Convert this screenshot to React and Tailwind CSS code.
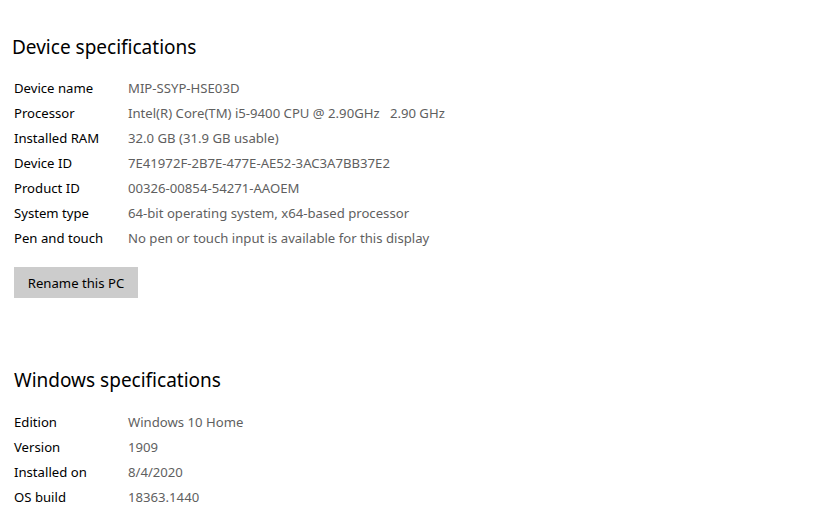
const deviceSpecs = [
    ['Device name', 'MIP-SSYP-HSE03D'],
    ['Processor', 'Intel(R) Core(TM) i5-9400 CPU @ 2.90GHz   2.90 GHz'],
    ['Installed RAM', '32.0 GB (31.9 GB usable)'],
    ['Device ID', '7E41972F-2B7E-477E-AE52-3AC3A7BB37E2'],
    ['Product ID', '00326-00854-54271-AAOEM'],
    ['System type', '64-bit operating system, x64-based processor'],
    ['Pen and touch', 'No pen or touch input is available for this display'],
];

const windowsSpecs = [
    ['Edition', 'Windows 10 Home'],
    ['Version', '1909'],
    ['Installed on', '8/4/2020'],
    ['OS build', '18363.1440'],
];

function SpecRow({ label, value }) {
    return (
        <div className="flex h-[25px] items-center">
            <div className="w-[114px] shrink-0 text-black">{label}</div>
            <div className="whitespace-pre text-[#5f5f5f]">{value}</div>
        </div>
    );
}

export default function App() {
    return (
        <div className="h-[516px] w-[828px] overflow-hidden bg-white pl-[14px] font-['Noto_Sans',sans-serif] text-[13.15px]">
            {/* device */}
            <h2 className="-ml-[2px] mt-[32px] h-[30px] text-[19px] leading-[30px] text-black">Device specifications</h2>

            <div className="mt-[14px]">
                {deviceSpecs.map(([label, value]) => (
                    <SpecRow key={label} label={label} value={value} />
                ))}
            </div>

            <button className="mt-[16px] flex h-[31px] w-[124px] items-center justify-center bg-[#cccccc] pt-[2px] text-black">
                Rename this PC
            </button>

            {/* windows */}
            <h2 className="mt-[67px] h-[30px] text-[19px] leading-[30px] text-black">Windows specifications</h2>

            <div className="mt-[15px]">
                {windowsSpecs.map(([label, value]) => (
                    <SpecRow key={label} label={label} value={value} />
                ))}
            </div>
        </div>
    );
}
